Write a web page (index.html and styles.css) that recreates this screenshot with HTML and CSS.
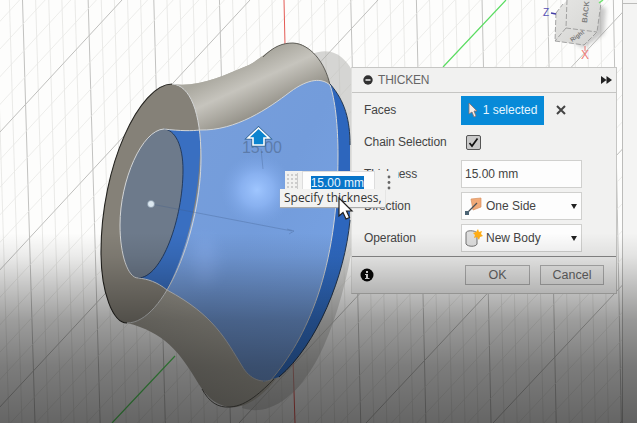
FILE: index.html
```html
<!DOCTYPE html>
<html lang="en">
<head>
<meta charset="utf-8">
<title>Thicken</title>
<link rel="stylesheet" href="styles.css">
</head>
<body>
<main class="viewport">
  <svg class="scene" viewBox="0 0 637 423" width="637" height="423">
    <defs>
      <linearGradient id="body" x1="0" y1="0" x2="1" y2="1"><stop offset="0" stop-color="#bfbdb7"/><stop offset=".25" stop-color="#bab8b1"/><stop offset=".4" stop-color="#9b988f"/><stop offset="1" stop-color="#c9c6bb"/></linearGradient>
      <linearGradient id="neck" gradientUnits="userSpaceOnUse" x1="245" y1="62" x2="268" y2="112"><stop offset="0" stop-color="#aaa89f"/><stop offset=".4" stop-color="#c6c4bd"/><stop offset="1" stop-color="#918e85"/></linearGradient>
      <linearGradient id="face" x1="0" y1="0" x2="1" y2="1"><stop offset="0" stop-color="#789fdb"/><stop offset=".5" stop-color="#739cdb"/><stop offset="1" stop-color="#78a4e6"/></linearGradient>
      <linearGradient id="edge" x1="0" y1="0" x2="0" y2="1"><stop offset=".5" stop-color="#2d66bd"/><stop offset="1" stop-color="#3b80e0"/></linearGradient>
      <radialGradient id="shine"><stop offset="0" stop-color="#9fc6ff"/><stop offset=".45" stop-color="#90b8f7" stop-opacity=".75"/><stop offset="1" stop-color="#7ca5e6" stop-opacity="0"/></radialGradient>
      <linearGradient id="cube" x1="0" y1="0" x2="1" y2="1"><stop offset="0" stop-color="#e6e6e4"/><stop offset="1" stop-color="#d3d3d1"/></linearGradient>
      <filter id="soft"><feGaussianBlur stdDeviation="2"/></filter>
      <filter id="softer" x="-50%" y="-50%" width="200%" height="200%"><feGaussianBlur stdDeviation="7"/></filter>
    </defs>
    <g id="grid" fill="none"></g>
    <path d="M284 0 285 45M293 360 295 423" stroke="#e45a55"/>
    <path d="M506 0 443 67M175 356 112 423" stroke="#5bdc62" stroke-width="1.2"/>

    <path d="M312 54C333 45 349 58 357 82C369 150 358 280 318 358C294 402 266 416 242 408Z" fill="#b5b4b0" fill-opacity=".55"/>
    <path d="M172 84C197 88 223 76 249 65C267 55 274 43 293 43C309 43 324 61 330 84C350 170 337 295 283 369C265 397 245 409 228 407C213 404 205 395 195 378C180 353 164 332 127 323Z" fill="url(#body)"/>
    <path d="M172 84C197 88 223 76 249 65C267 55 274 43 293 43C309 43 324 61 330 84C314 75 304 84 290 94C264 112 235 132 200 130Z" fill="url(#neck)"/>
    <path d="M263 57C274 46 283 43 293 43C310 44 325 62 330 85M202 389C209 402 218 408 230 407C247 406 262 391 274 379" fill="none" stroke="#55534e" stroke-width=".9"/>
    <path d="M330 84C345 101 350 120 350 145V220C345 276 317 345 279 377L263 382Z" fill="url(#edge)"/>
    <path d="M330 84C345 101 350 120 350 145M350 220C345 276 317 345 279 377" fill="none" stroke="#26384f" stroke-width="1"/>
    <path d="M172 84C140 84 101 165 101 252C101 293 113 323 127 323C165 323 201 230 201 158C201 112 190 85 172 84Z" fill="#858178"/>
    <path d="M164 129C180 131 192 131 200 130C202 180 191 244 167 290C157 282 148 279 138 278C170 270 202 138 164 129Z" fill="#396fc1"/>
    <path d="M200 130C236 131 269 108 290 92C309 78 322 78 330 85C335 99 338 125 338 155C338 270 307 338 271 380C262 383 250 380 242 366C226 340 214 315 167 290C193 236 204 181 200 130Z" fill="url(#face)"/>
    <circle cx="257" cy="190" r="36" fill="url(#shine)"/>
    <ellipse cx="205" cy="262" rx="12" ry="24" fill="#98bcff" opacity=".3" filter="url(#softer)"/>
    <path d="M164 129C142 130 120 180 120 225C120 255 128 278 138 278C162 278 183 218 183 170C183 145 175 130 164 129Z" fill="#6d7a8b"/>
    <path d="M172 84C140 84 101 165 101 252C101 293 113 323 127 323" fill="none" stroke="#24231f" stroke-width="1.1"/>
    <path d="M164 129C175 130 183 145 183 170C183 218 162 278 138 278" fill="none" stroke="#243b5d"/>
    <g fill="none" stroke="#d3d5d6" stroke-width="1">
      <path d="M172 84C190 85 201 112 201 158C201 230 165 323 127 323"/>
      <path d="M138 278C128 278 120 255 120 225C120 180 142 130 164 129C180 131 192 131 200 130C236 131 269 108 290 92C309 78 322 78 330 85C335 99 338 125 338 155C338 270 307 338 271 380C262 383 250 380 242 366C226 340 214 315 167 290C157 282 148 279 138 278"/>
    </g>
    <path d="M151 204 292 231M261 149 263 169M287 229 294 231 289 234" fill="none" stroke="#405d88" stroke-opacity=".45" stroke-width=".7"/>
    <circle cx="151" cy="204" r="3.5" fill="#dce8f0" stroke="#7f91a3" stroke-width=".7"/>
    <text x="262" y="153" class="dimension">15.00</text>
    <path d="M258.500 128 269 138H264V145H253V138H248Z" fill="#0b84cf" stroke="#265c8b" stroke-width="3"/>
    <path d="M258.500 128 269 138H264V145H253V138H248Z" fill="#0b84cf" stroke="#fff" stroke-width="1.6"/>

    <path d="M592 4 606 8 604 34 583 48 575 43Z" fill="#777" opacity=".4" filter="url(#soft)"/>
    <path d="M567 0H599L601 3 597 33 584 45 555 41 556 13Z" fill="url(#cube)"/>
    <path d="M567 0 566 28 597 32M566 28 555 41M556 13 555 41 584 45 597 32 601 3M556 13 563 4" fill="none" stroke="#909090" stroke-width=".8" stroke-dasharray="5 2"/>
    <text class="cube-text" transform="translate(587 23) rotate(-84)">BACK</text>
    <text class="cube-small" transform="translate(572 42) rotate(-35)">Right</text>
    <text x="543" y="16" class="axis-z">Z</text>
    <path d="M551 13 556 14" stroke="#443ea5" stroke-width="1.3"/>
    <text x="581" y="59" class="axis-x">X</text>
    <path d="M585 46V51" stroke="#e77571"/>
    <path d="M599 3 603 0" stroke="#6ee16e" stroke-width="1.5"/>
    <path d="M622 0H637V423H622Z" fill="#f4f4f3"/>
    <path d="M622.500 0V423M622 3.500H637" stroke="#bcbcba"/>
  </svg>

  <section class="panel">
    <header class="panel-head">
      <svg width="10" height="10"><circle cx="5" cy="5" r="4.7" fill="#303030"/><path d="M2.500 5H7.500" stroke="#eee" stroke-width="1.5"/></svg>
      <span class="title">THICKEN</span>
      <svg width="11" height="8"><path d="M0 0 5.500 4 0 8ZM5.500 0 11 4 5.500 8Z" fill="#222"/></svg>
    </header>
    <div class="rows">
      <div class="row"><label>Faces</label>
        <button class="selected"><svg width="10" height="16"><path d="M1 1V12L4 10 6 15 8 14 6 9H9Z" fill="#f5eee9" stroke="#8b6f6b" stroke-width=".8"/></svg>1 selected</button>
        <svg class="clear" width="10" height="10"><path d="M1 1 9 9M9 1 1 9" stroke="#444" stroke-width="2"/></svg>
      </div>
      <div class="row"><label>Chain Selection</label><span class="check"><svg width="13" height="13"><path d="M2.500 7 5 10 10.500 2.500" fill="none" stroke="#111" stroke-width="1.7"/></svg></span></div>
      <div class="row"><label>Thickness</label><div class="field">15.00 mm</div></div>
      <div class="row"><label>Direction</label><div class="field select"><svg width="18" height="20"><path d="M6 3 16 2V11L8 14Z" fill="#f1aa78" stroke="#d9915f" stroke-width=".7"/><path d="M2 17 12 7" stroke="#4a5259" stroke-width="1.2"/><path d="M0 15H4V19H0Z" fill="#4b6474"/></svg><span>One Side</span><i></i></div></div>
      <div class="row"><label>Operation</label><div class="field select"><svg width="18" height="20"><path d="M1 5C1 2 10 2 12 5V16C11 19 3 19 1 16Z" fill="#dedede" stroke="#737373"/><path d="M13 1 14 4 17 3 16 6 18 8 15 9 14 12 12 9 9 10 10 7 8 5 11 4Z" fill="#ffad16"/></svg><span>New Body</span><i></i></div></div>
    </div>
    <footer class="panel-foot">
      <svg width="14" height="14"><circle cx="7" cy="7" r="6.500" fill="#080808"/><path d="M5 6H8V10H9.500V11H5V10H6V7H5ZM6 3H8V5H6Z" fill="#eee"/></svg>
      <button class="ok">OK</button><button class="cancel">Cancel</button>
    </footer>
  </section>

  <div class="mini"><span class="grip"></span><div class="mini-input"><span>15.00 mm</span></div>
    <svg class="more" width="4" height="17"><circle cx="2" cy="4" r="1.4"/><circle cx="2" cy="9.500" r="1.4"/><circle cx="2" cy="15" r="1.4"/></svg>
  </div>
  <div class="tip">Specify thickness,</div>
  <svg class="pointer" width="18" height="26" viewBox="0 0 18 26"><path d="M2 2V20L6 16.500 9 23 12.500 21.500 9.500 15H15Z" fill="#fff" stroke="#222" stroke-width="1.2"/></svg>
  <div class="shade"></div>
</main>
<script src="grid.js"></script>
</body>
</html>
```
FILE: styles.css
```css
* { box-sizing: border-box; }
body { margin: 0; overflow: hidden; font-family: "Liberation Sans", Arial, sans-serif; }
.viewport { position: relative; width: 637px; height: 423px; overflow: hidden; background: #fdfdfc; }
.scene { display: block; }
.dimension { font-size: 16px; text-anchor: middle; fill: #4c6589; fill-opacity: .6; }
.cube-text { font-size: 7.5px; font-weight: bold; fill: #808080; }
.cube-small { font-size: 6px; font-weight: bold; fill: #777; }
.axis-z { font-size: 10px; fill: #5651b6; }
.axis-x { font-size: 12px; fill: #ee7b77; }
.panel { position: absolute; left: 351px; top: 67px; width: 266px; height: 227px; background: #f1f1f0; border: 1px solid #c6c6c4; border-left-color: #e0e0de; color: #444; font-size: 12px; display: flex; flex-direction: column; }
.panel-head { height: 25px; border-bottom: 1px solid #c5c5c3; display: flex; align-items: center; padding: 0 4px 0 11px; gap: 5px; flex: none; }
.title { flex: 1; color: #666; font-size: 12px; letter-spacing: -.2px; }
.rows { display: flex; flex-direction: column; padding: 1px 0 0 12px; flex: none; height: 163px; }
.row { display: flex; align-items: center; height: 32px; flex: none; }
.row label { width: 97px; letter-spacing: -.1px; }
button { font: inherit; padding: 0; }
.selected { width: 83px; height: 29px; border: 0; background: #078ad8; color: #e6f6ff; display: flex; align-items: center; justify-content: center; gap: 5px; white-space: nowrap; }
.clear { margin-left: 12px; }
.check { width: 15px; height: 15px; margin-left: 5px; background: #c9c9c9; border: 1px solid #555; border-radius: 2px; display: flex; }
.field { width: 121px; height: 28px; background: #fdfdfd; border: 1px solid #d0d0ce; padding: 0 3px; display: flex; align-items: center; color: #444; }
.select { gap: 3px; padding: 0 4px 0 3px; }
.select span { flex: 1; }
.select i { border: 3px solid transparent; border-top: 5px solid #222; border-bottom: 0; }
.panel-foot { flex: 1; border-top: 1px solid #888; display: flex; align-items: center; padding: 0 12px 0 8px; }
.panel-foot button { height: 20px; border: 1px solid #b0b0b0; background: #ededec; color: #666; font-size: 12.5px; }
.panel-foot .ok { width: 65px; margin-left: auto; }
.panel-foot .cancel { width: 64px; margin-left: 10px; }
.mini { position: absolute; left: 285px; top: 171px; width: 113px; height: 21px; display: flex; background: #f1f1f0; }
.grip { width: 13px; margin: 2px 4px 2px 0; border-right: 1px solid #ccc; background: radial-gradient(circle, #ccc .7px, transparent 1px) 1px 0 / 4px 4px; }
.mini-input { width: 73px; background: #fdfdfd; border: 1px solid #ddd; display: flex; align-items: center; justify-content: flex-end; padding: 3px 10px 0 0; }
.mini-input span { background: #0875c9; color: #eaf6ff; font-size: 12px; height: 14px; line-height: 14px; white-space: nowrap; }
.more { margin: 2px 0 0 12px; fill: #666; }
.tip { position: absolute; left: 280px; top: 189px; width: 105px; height: 18px; padding-left: 4px; background: #f2f2f1; box-shadow: 0 1px 1px #aaa; color: #333; font: 12px/18px "Open Sans", "Noto Sans", sans-serif; letter-spacing: -.02px; white-space: nowrap; }
.pointer { position: absolute; left: 337px; top: 196px; }
.shade { position: absolute; inset: 233px 0 0; pointer-events: none; background: linear-gradient(rgba(0,0,0,0), rgba(0,0,0,.07) 12%, rgba(0,0,0,.22) 28%, rgba(0,0,0,.38) 46%, rgba(0,0,0,.51) 70%, rgba(0,0,0,.6)); }
```
FILE: grid.js
```js
const grid = document.getElementById("grid");
function line(x1, x2, major, color) {
  const p = document.createElementNS("http://www.w3.org/2000/svg", "path");
  p.setAttribute("d", `M${x1} 0 ${x2} 423`);
  p.setAttribute("stroke", color);
  p.setAttribute("stroke-width", major ? 1 : 0.8);
  grid.appendChild(p);
}
for (let i = -8; i < 50; i++) {
  const major = i % 5 === 0;
  if (i !== 20) line(22.5 + 13.13 * i, 35 + 13.03 * i, major, major ? "#c2c2c0" : "#e4e4e2");
}
for (let i = -22; i < 26; i++) {
  const major = i % 5 === 0;
  if (i !== 0) line(506 + 25.6 * i, 112 + 25.4 * i, major, major ? "#bfbfbd" : "#e8e8e6");
}
```
